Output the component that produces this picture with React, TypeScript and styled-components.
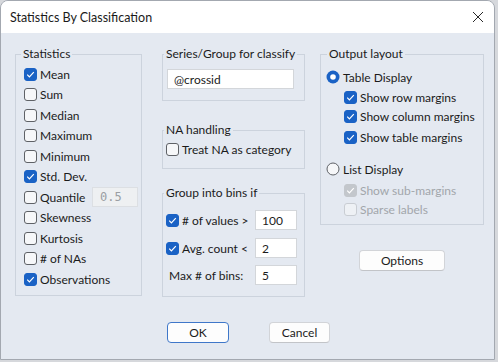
import React from "react";
import styled, { createGlobalStyle } from "styled-components";

const Global = createGlobalStyle`
  html, body { margin: 0; padding: 0; background: #d6d8dc; }
  body { font-family: Lato, "Noto Sans", "DejaVu Sans", sans-serif; font-size: 12px; color: #1b1b1b; }
  * { box-sizing: border-box; }
`;

const Window = styled.div`
  width: 495px;
  height: 360px;
  border: 1px solid #a3a8b0;
  border-radius: 8px 8px 0 0;
  background: #e4e9f1;
  overflow: hidden;
  display: flex;
  flex-direction: column;
`;

const TitleBar = styled.div`
  height: 32px;
  background: #ffffff;
  display: flex;
  align-items: center;
  justify-content: space-between;
  padding: 0 5px 0 9px;
  flex-shrink: 0;
`;

const Title = styled.div`
  font-size: 12.5px;
  color: #1a1a1a;
  margin-top: 1px;
`;

const CloseBtn = styled.div`
  width: 18px;
  height: 18px;
  display: flex;
  align-items: center;
  justify-content: center;
  margin-right: 2px;
`;

const Main = styled.div`
  padding: 13px 0 0 14px;
  display: flex;
  align-items: flex-start;
`;

const Column = styled.div<{ $width: number; $left: number }>`
  width: ${(p) => p.$width}px;
  margin-left: ${(p) => p.$left}px;
  display: flex;
  flex-direction: column;
`;

const Group = styled.fieldset<{ $h: number; $top?: number; $pl: number }>`
  margin: ${(p) => p.$top ?? 0}px 0 0 0;
  height: ${(p) => p.$h}px;
  border: 1px solid #ccd3dd;
  padding: 0 0 0 ${(p) => p.$pl}px;
  min-width: 0;
  display: flex;
  flex-direction: column;
`;

const Legend = styled.legend<{ $ml: number }>`
  font-size: 12px;
  line-height: 16px;
  padding: 0 2px;
  margin-left: ${(p) => p.$ml}px;
  color: #1b1b1b;
`;

const Row = styled.div<{ $h?: number; $indent?: number; $pt?: number }>`
  height: ${(p) => p.$h ?? 20}px;
  margin-top: ${(p) => p.$pt ?? 0}px;
  padding-left: ${(p) => p.$indent ?? 0}px;
  display: flex;
  align-items: center;
  flex-shrink: 0;
`;

const Label = styled.span<{ $disabled?: boolean }>`
  margin-left: 3px;
  white-space: nowrap;
  color: ${(p) => (p.$disabled ? "#a2a6ab" : "#1b1b1b")};
`;

const PlainLabel = styled.span`
  white-space: nowrap;
  padding-left: 3px;
`;

const Box = styled.span<{ $checked?: boolean; $disabled?: boolean }>`
  width: 13px;
  height: 13px;
  border-radius: 3px;
  flex-shrink: 0;
  display: inline-flex;
  align-items: center;
  justify-content: center;
  background: ${(p) =>
    p.$checked ? (p.$disabled ? "#c3c7cc" : "#1a62c5") : p.$disabled ? "#eef1f5" : "#f6f7f9"};
  border: 1px solid
    ${(p) => (p.$checked ? (p.$disabled ? "#c3c7cc" : "#1a62c5") : p.$disabled ? "#c9cdd3" : "#5e6166")};
`;

const Circle = styled.span`
  width: 14px;
  height: 14px;
  flex-shrink: 0;
  display: inline-flex;
`;

const TextBox = styled.div<{ $w: number; $disabled?: boolean; $mono?: boolean }>`
  width: ${(p) => p.$w}px;
  height: 20px;
  background: ${(p) => (p.$disabled ? "#eef0f2" : "#ffffff")};
  border: 1px solid ${(p) => (p.$disabled ? "#dcdfe3" : "#d3d6da")};
  display: flex;
  align-items: center;
  padding-left: ${(p) => (p.$mono ? 7 : 6)}px;
  font-family: ${(p) => (p.$mono ? '"DejaVu Sans Mono", "Liberation Mono", monospace' : "inherit")};
  font-size: 12px;
  color: ${(p) => (p.$disabled ? "#9a9ea3" : "#1b1b1b")};
  flex-shrink: 0;
`;

const Spacer = styled.div`
  flex: 1;
`;

const Button = styled.div<{ $w: number; $primary?: boolean }>`
  width: ${(p) => p.$w}px;
  height: 21px;
  background: #fdfdfd;
  border: 1px solid ${(p) => (p.$primary ? "#3f77c9" : "#d2d4d8")};
  border-bottom-color: ${(p) => (p.$primary ? "#3f77c9" : "#c2c4c8")};
  border-radius: 4px;
  display: flex;
  align-items: center;
  justify-content: center;
  font-size: 12px;
  color: #1b1b1b;
`;

const OptionsWrap = styled.div`
  margin-top: 25px;
  display: flex;
  justify-content: center;
`;

const Footer = styled.div`
  margin-top: 25px;
  display: flex;
  justify-content: center;
  gap: 40px;
  padding-left: 2px;
`;

const Check = ({ checked, disabled }: { checked?: boolean; disabled?: boolean }) => (
  <Box $checked={checked} $disabled={disabled}>
    {checked && (
      <svg width="11" height="11" viewBox="0 0 11 11">
        <path d="M2.2 5.6 L4.4 7.8 L8.8 3.2" fill="none" stroke="#ffffff" strokeWidth="1.2" />
      </svg>
    )}
  </Box>
);

const Radio = ({ selected }: { selected?: boolean }) => (
  <Circle>
    <svg width="14" height="14" viewBox="0 0 14 14">
      {selected ? (
        <>
          <circle cx="7" cy="7" r="6.5" fill="#1a62c5" />
          <circle cx="7" cy="7" r="2.8" fill="#ffffff" />
        </>
      ) : (
        <circle cx="7" cy="7" r="6" fill="#f6f7f9" stroke="#5e6166" strokeWidth="1" />
      )}
    </svg>
  </Circle>
);

const CheckRow = ({
  label,
  checked,
  disabled,
  h,
  indent,
  pt,
}: {
  label: string;
  checked?: boolean;
  disabled?: boolean;
  h?: number;
  indent?: number;
  pt?: number;
}) => (
  <Row $h={h} $indent={indent} $pt={pt}>
    <Check checked={checked} disabled={disabled} />
    <Label $disabled={disabled}>{label}</Label>
  </Row>
);

const stats: [string, boolean][] = [
  ["Mean", true],
  ["Sum", false],
  ["Median", false],
  ["Maximum", false],
  ["Minimum", false],
  ["Std. Dev.", true],
];
const stats2: [string, boolean][] = [
  ["Skewness", false],
  ["Kurtosis", false],
  ["# of NAs", false],
  ["Observations", true],
];

export default function App() {
  return (
    <>
      <Global />
      <Window>
        <TitleBar>
          <Title>Statistics By Classification</Title>
          <CloseBtn>
            <svg width="12" height="12" viewBox="0 0 12 12">
              <path d="M1 1 L11 11 M11 1 L1 11" stroke="#2a2a2a" strokeWidth="1" fill="none" />
            </svg>
          </CloseBtn>
        </TitleBar>
        <Main>
          <Column $width={127} $left={0}>
            <Group $h={250} $pl={8}>
              <Legend $ml={-3}>Statistics</Legend>
              <Row $h={2} />
              {stats.map(([l, c]) => (
                <CheckRow key={l} label={l} checked={c} h={20.5} />
              ))}
              <Row $h={20.5}>
                <Check />
                <Label>Quantile</Label>
                <Spacer />
                <TextBox $w={46} $disabled $mono>
                  0.5
                </TextBox>
                <Row $h={1} $indent={3} />
              </Row>
              {stats2.map(([l, c]) => (
                <CheckRow key={l} label={l} checked={c} h={20.5} />
              ))}
            </Group>
          </Column>
          <Column $width={143} $left={20}>
            <Group $h={55} $pl={3}>
              <Legend $ml={-2}>Series/Group for classify</Legend>
              <Row $h={20} $indent={1} $pt={7}>
                <TextBox $w={127}>@crossid</TextBox>
              </Row>
            </Group>
            <Group $h={47} $top={21} $pl={3}>
              <Legend $ml={-2}>NA handling</Legend>
              <CheckRow label="Treat NA as category" pt={1} />
            </Group>
            <Group $h={112} $top={16} $pl={3}>
              <Legend $ml={-2}>Group into bins if</Legend>
              <Row $pt={9}>
                <Check checked />
                <Label>&#35; of values &gt;</Label>
                <Spacer />
                <TextBox $w={42}>100</TextBox>
                <Row $h={1} $indent={7} />
              </Row>
              <Row $pt={8}>
                <Check checked />
                <Label>Avg. count &lt;</Label>
                <Spacer />
                <TextBox $w={42}>2</TextBox>
                <Row $h={1} $indent={7} />
              </Row>
              <Row $pt={7}>
                <PlainLabel>Max # of bins:</PlainLabel>
                <Spacer />
                <TextBox $w={42}>5</TextBox>
                <Row $h={1} $indent={7} />
              </Row>
            </Group>
          </Column>
          <Column $width={164} $left={15}>
            <Group $h={179} $pl={5}>
              <Legend $ml={1}>Output layout</Legend>
              <Row $pt={5}>
                <Radio selected />
                <Label>Table Display</Label>
              </Row>
              <CheckRow label="Show row margins" checked h={19} indent={18} pt={1} />
              <CheckRow label="Show column margins" checked h={19} indent={18} />
              <CheckRow label="Show table margins" checked h={23} indent={18} />
              <Row $pt={10}>
                <Radio />
                <Label>List Display</Label>
              </Row>
              <CheckRow label="Show sub-margins" checked disabled h={19} indent={18} pt={2} />
              <CheckRow label="Sparse labels" disabled h={19} indent={18} />
            </Group>
            <OptionsWrap>
              <Button $w={86}>Options</Button>
            </OptionsWrap>
          </Column>
        </Main>
        <Footer>
          <Button $w={62} $primary>
            OK
          </Button>
          <Button $w={61}>Cancel</Button>
        </Footer>
      </Window>
    </>
  );
}
